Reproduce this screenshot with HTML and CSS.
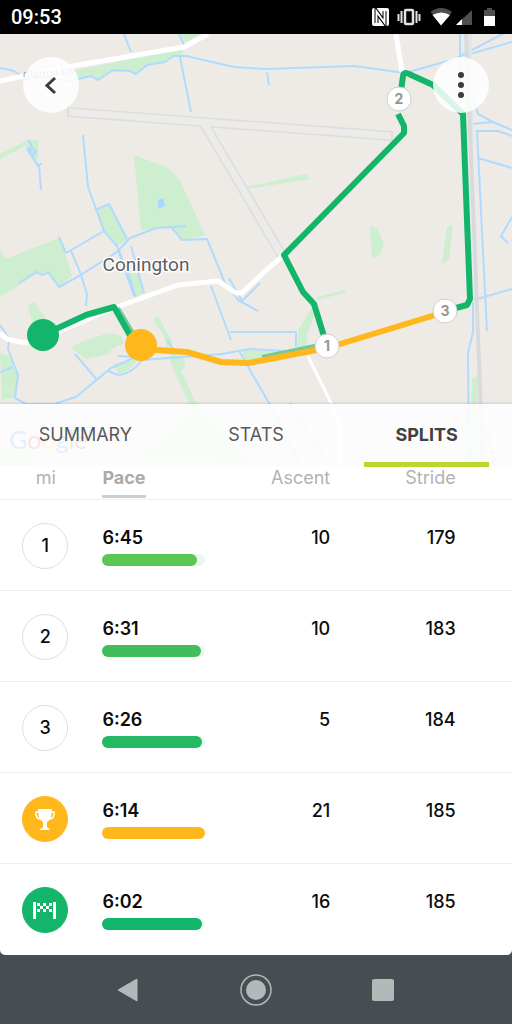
FILE: index.html
```html
<!DOCTYPE html>
<html lang="en">
<head>
<meta charset="utf-8">
<meta name="viewport" content="width=device-width, initial-scale=1">
<title>Activity splits</title>
<link rel="stylesheet" href="styles.css">
</head>
<body>
<header class="status">
  <time class="clock">09:53</time>
  <svg class="status-icons" viewBox="370 0 126 34" role="img" aria-label="NFC, vibrate, Wi-Fi, signal, battery">
    <rect x="372" y="8" width="17" height="18" rx="2" fill="#fff"/>
    <path d="M376.500 23V11.500l8 11V11" fill="none" stroke="#000" stroke-width="4"/>
    <path d="M376.500 23V11.500l8 11V11" fill="none" stroke="#fff" stroke-width="2"/>
    <rect x="405" y="10" width="8" height="14" rx="1" fill="none" stroke="#e2e2e2" stroke-width="2.500"/>
    <path d="M401.500 11v12M416.500 11v12M398.500 14v7M419.500 14v7" stroke="#e2e2e2" stroke-width="2"/>
    <path d="M430.500 12Q441 4 452 12L441 25z" fill="#4e4e4e"/>
    <path d="M432.500 15q8.500-5 17.500 0l-9 10.500z" fill="#fff"/>
    <path d="M472 10v15h-16z" fill="#4e4e4e"/><path d="M462 19v6h-6z" fill="#fff"/>
    <path d="M487 8h5v2h3v7h-11v-7h3z" fill="#4e4e4e"/><path d="M484 16h11v10h-11z" fill="#fff"/>
  </svg>
</header>

<main class="activity">
  <section class="map" aria-label="Route map">
    <svg class="map-canvas" viewBox="0 34 512 432" preserveAspectRatio="xMidYMid slice">
      <rect class="land" y="34" width="512" height="432"/>
      <g class="green">
        <path d="M76 70L182 49l1 6-14 3-7 5-14 2-13 10-7-4-16 1-15 9-7-5-20 3z"/>
        <path d="M179 34h22l-15 8z"/>
        <path d="M0 154l28-14h10v24l-10-15-3-3-25 13z"/>
        <path d="M134 155l32 12q12 8 17 20l22 48-23 6-9-13-32 2-2-20z"/>
        <path d="M246 187l61-13 3 5-63 10z"/>
        <path d="M96 210l13-6 19 36-12 6-11-14z"/>
        <path d="M0 250l5 9 54-21 6 14 7 24-13 11-11-15-12 2-18 12L0 297z"/>
        <path d="M126 274l12-1 6 20-8 4-5-9z"/>
        <path d="M28 306l6-4 12 16-13 6zM71 348l12-7 26-8 12 3 3 8-8 2-10 9-20 4z"/>
        <path d="M153 319l5-3 13 24 3 13 11 7v7l-4 4 35 74h-8l-37-81-7-28z"/>
        <path d="M0 353l13 4v10l5 9-4 21-12 3zM113 364l27-6-11 12-10 4z"/>
        <path d="M370 226l8 3 6 16-5 11-7 2zM447 227l6-2-4 34-7 5zM317 297l28-7v3l-28 7z"/>
        <path d="M311 309l4 5-8 21v13h-9v-18zM242 350l60 2-45 9-13-1z"/>
        <path d="M472 378l6-2-1 90h-7zM0 448h32v18H0zM140 455l52-45 28 15 32 41z"/>
      </g>
      <g class="water">
        <path d="M0 68l14 3 6 4 50 6 21-5 7 4 15-10 16 1 7 3 11-9 18-3 8-6 13 0 48 11 30 2 90-3 51 7 50-14 55-29"/>
        <path d="M179 34l6 13M124 34l7 18M180 57l11 55M267 72l2 13"/>
        <path d="M28 140l4 6-2 4 3 6 3-5-5-3-4 1 11 17 3-2-2 1 2 25"/>
        <path d="M83 135l5 52 16 44 13 15 12 30 7 22M95 210l14-6 18 35M66 253l38-22M59 237l7 16M71 251l9 21 7 22-1 12M118 250l16 46M131 246l13 47"/>
        <path d="M19 283l17-11 7 3 5-3 11 15 20-11 38-24 13-14 26-10 30-2"/>
        <path d="M172 228l10 12 25-1 18 44 13 17 20 11M211 286l20 54M230 332h66v15M229 278l6 11 7 12 18-18"/>
        <path d="M0 325l9 14-1 10 10 26-3 23 11 6h28l22-7 35-29 25-11-18-1M0 372l13-5M75 354l22 26M108 371l10 4q14-1 24-15l80-6 27-5 54 3M239 351l30 52 30 60M167 340l7 10"/>
        <path d="M460 34v50M469 84l9 30 15 8 19 8M470 54l42-12M472 124l20-2"/>
        <path d="M476 131l22 0 14 5M477 131l10 200M478 158l34 10M474 300l38-11M512 217l-11 19 7 7M473 302v30l-5 21 1 112M487 430l7 35M290 403l39 62"/>
      </g>
      <g class="runway">
        <path d="M67 112l326 24M202 120l82 139"/>
        <path class="runway-fill" d="M69 112l322 24M202 120l82 139"/>
      </g>
      <path class="rail-light" d="M470 34l2 170"/>
      <path class="rail" d="M466 34l7 170 10 262"/>
      <g class="road">
        <path d="M0 81l67-14 117-20 24-13M396 34l6 38"/>
        <path d="M0 333l7 6 13 3 20 1 20-12 54-23 64-23 40-4 18 12h6l23-22 19-16"/>
        <path class="lane" d="M308 356l22 45 10 26v39"/>
      </g>
      <path class="run shade" d="M118 308l24 40M262 357l62-13"/>
      <path class="run" d="M43 335l43-20 28-8 21 37M327 346l-13-42-11-12-19-37 120-122v-7l-6-12M400 98l3-22q1-5 6-2l24 11 30 29 7 185-3 6-22 6"/>
      <path class="run fast" d="M141 349l46 3 34 10 28 1 78-15 118-36"/>
      <circle class="start" cx="43" cy="335" r="16"/>
      <circle class="best" cx="141" cy="345" r="16"/>
      <g class="pin">
        <circle cx="399" cy="99" r="12"/><circle cx="327" cy="346" r="12"/><circle cx="445" cy="311" r="12"/>
        <text x="399" y="104">2</text><text x="327" y="351">1</text><text x="445" y="316">3</text>
      </g>
      <path fill="#a9d8ff" d="M158 200l5-2 2 8-7 3z"/>
      <text class="street" transform="rotate(-7 48 73)" x="48" y="77">Glatton Ln</text>
      <text class="place" x="146" y="271">Conington</text>
      <text class="google" x="9" y="449"><tspan fill="#4285f4">G</tspan><tspan fill="#ea4335">o</tspan><tspan fill="#fbbc05">o</tspan><tspan fill="#4285f4">g</tspan><tspan fill="#34a853">l</tspan><tspan fill="#ea4335">e</tspan></text>
    </svg>
    <div class="map-actions">
      <button class="round" type="button" aria-label="Back">
        <svg viewBox="0 0 56 56"><path d="M32 21l-8 7.500 8 7.500" fill="none" stroke="#3c3c3c" stroke-width="3"/></svg>
      </button>
      <button class="round" type="button" aria-label="More options">
        <svg viewBox="0 0 56 56" fill="#3c3c3c"><circle cx="28" cy="18" r="3"/><circle cx="28" cy="28" r="3"/><circle cx="28" cy="38" r="3"/></svg>
      </button>
    </div>
    <nav class="tabs" aria-label="Activity views">
      <button class="tab" type="button">SUMMARY</button>
      <button class="tab" type="button">STATS</button>
      <button class="tab active" type="button" aria-current="page">SPLITS</button>
    </nav>
  </section>

  <table class="splits">
    <colgroup><col class="col-mi"><col class="col-pace"><col class="col-ascent"><col></colgroup>
    <thead>
      <tr><th class="mi" scope="col">mi</th><th scope="col"><button class="sort" type="button">Pace</button></th><th class="num" scope="col">Ascent</th><th class="num last" scope="col">Stride</th></tr>
    </thead>
    <tbody>
      <tr><td class="mi"><span class="badge">1</span></td><td><span class="pace">6:45</span><div class="track"><div class="fill lime" style="width:92%"></div></div></td><td class="num">10</td><td class="num last">179</td></tr>
      <tr><td class="mi"><span class="badge">2</span></td><td><span class="pace">6:31</span><div class="track"><div class="fill leaf" style="width:96%"></div></div></td><td class="num">10</td><td class="num last">183</td></tr>
      <tr><td class="mi"><span class="badge">3</span></td><td><span class="pace">6:26</span><div class="track"><div class="fill jade" style="width:97%"></div></div></td><td class="num">5</td><td class="num last">184</td></tr>
      <tr><td class="mi"><span class="badge gold"><svg viewBox="0 0 46 46" role="img" aria-label="Fastest mile"><path d="M16 13h14c0 8-2 11-5 13v5c0 1 3 1 3 3H18c0-2 3-2 3-3v-5c-3-2-5-5-5-13z" fill="#fff"/><path d="M17 16h-3v3q1 4 5 4M29 16h3v3q-1 4-5 4" fill="none" stroke="#fff" stroke-width="1.500"/></svg></span></td><td><span class="pace">6:14</span><div class="track"><div class="fill amber" style="width:100%"></div></div></td><td class="num">21</td><td class="num last">185</td></tr>
      <tr><td class="mi"><span class="badge finish"><svg viewBox="0 0 46 46" role="img" aria-label="Finish"><path d="M11 15h3v17h-3zM31 15h3v17h-3zM15 16h3v3h-3zM21 16h3v3h-3zM27 16h3v3h-3zM18 19h3v3h-3zM24 19h3v3h-3zM15 22h3v3h-3zM21 22h3v3h-3zM27 22h3v3h-3z" fill="#fff"/></svg></span></td><td><span class="pace">6:02</span><div class="track"><div class="fill green-bar" style="width:97%"></div></div></td><td class="num">16</td><td class="num last">185</td></tr>
    </tbody>
  </table>
</main>

<nav class="system" aria-label="System">
  <button type="button" aria-label="Back"><svg viewBox="0 0 32 32"><path d="M6 16L25 5v22z" fill="#b3b8b9" stroke="#b3b8b9" stroke-linejoin="round"/></svg></button>
  <button type="button" aria-label="Home"><svg viewBox="0 0 32 32"><circle cx="16" cy="16" r="15" fill="none" stroke="#b3b8b9" stroke-width="1.500"/><circle cx="16" cy="16" r="10" fill="#b3b8b9"/></svg></button>
  <button type="button" aria-label="Recent apps"><svg viewBox="0 0 32 32"><rect x="4" y="5" width="22" height="22" rx="2" fill="#b3b8b9"/></svg></button>
</nav>
</body>
</html>
```
FILE: styles.css
```css
* { box-sizing: border-box; }

body {
  margin: 0;
  min-height: 100vh;
  display: flex;
  flex-direction: column;
  background: #464e53;
  font-family: Inter, "Open Sans", sans-serif;
  color: #0c0c0c;
}

button {
  border: 0;
  padding: 0;
  background: none;
  font: inherit;
  color: inherit;
  cursor: pointer;
}

svg { display: block; }

.status {
  height: 34px;
  padding: 0 16px 0 11px;
  display: flex;
  align-items: center;
  justify-content: space-between;
  background: #000;
  color: #fff;
}
.clock { font: 500 20px/36px Roboto, sans-serif; }
.status-icons { width: 126px; height: 34px; }

.activity {
  background: #fff;
  border-radius: 0 0 5px 5px;
}

/* Map */
.map { position: relative; height: 432px; }
.map-canvas { width: 100%; height: 100%; }
.land { fill: #eeebe7; }
.green { fill: #cdeecf; }
.water { fill: none; stroke: #b0dbff; stroke-width: 2; stroke-linejoin: round; }
.runway { fill: none; stroke: #dedddd; stroke-width: 10; }
.runway .runway-fill { stroke: #ebebea; stroke-width: 7; }
.rail { fill: none; stroke: #d8dadc; stroke-width: 4; }
.rail-light { fill: none; stroke: #e1e6ea; stroke-width: 4; }
.road { fill: none; stroke: #fff; stroke-width: 5; stroke-linejoin: round; }
.lane { stroke-width: 3; }
.run { fill: none; stroke: #13b56a; stroke-width: 6; stroke-linejoin: round; }
.shade { stroke: #73c99b; stroke-width: 4; }
.fast { stroke: #ffb71b; }
.start { fill: #13b56a; }
.best { fill: #ffb71b; }
.pin circle { fill: #fff; stroke: #cfcfcf; }
.pin text { font-size: 14px; font-weight: 700; fill: #969696; text-anchor: middle; }
.street { font: 11px Roboto, sans-serif; fill: #9a9a9a; text-anchor: middle; }
.place {
  font: 19px Roboto, sans-serif;
  fill: #5a6066;
  stroke: #fff;
  stroke-width: 3;
  paint-order: stroke;
  text-anchor: middle;
}
.google { font: 25px Lato, sans-serif; }

.map-actions {
  position: absolute;
  inset: 23px 23px auto;
  display: flex;
  justify-content: space-between;
}
.round {
  width: 56px;
  height: 56px;
  border-radius: 50%;
  background: rgba(255, 255, 255, .85);
}

.tabs {
  position: absolute;
  inset: auto 0 0;
  height: 62px;
  display: grid;
  grid-template-columns: repeat(3, 1fr);
  background: rgba(255, 255, 255, .86);
  box-shadow: 0 -1px 2px rgba(0, 0, 0, .12);
}
.tab {
  position: relative;
  font-size: 18px;
  line-height: 62px;
  color: #58595a;
}
.tab.active { font-weight: 700; color: #404142; }
.tab.active::after {
  content: "";
  position: absolute;
  inset: auto 23px -1px;
  height: 5px;
  background: #bdd62f;
}

/* Splits */
.splits {
  width: 100%;
  table-layout: fixed;
  border-collapse: separate;
  border-spacing: 0;
  font-size: 18px;
  line-height: 24px;
}
.col-mi, .col-pace { width: 20%; }
.col-ascent { width: 24.5%; }
.splits th {
  height: 34px;
  padding: 0;
  border-bottom: 1px solid #efefef;
  vertical-align: top;
  text-align: left;
  font-weight: 400;
  color: #b2b2b2;
}
.sort {
  height: 32px;
  padding-bottom: 5px;
  border-bottom: 3px solid #cecece;
  font-weight: 700;
  line-height: 24px;
  color: #aaa;
}
.splits td {
  height: 91px;
  padding: 26px 0 0;
  border-bottom: 1px solid #efefef;
  vertical-align: top;
}
.splits tr:last-child td { border-bottom: 0; }
.splits .num { text-align: right; font-weight: 500; }
.splits th.num { font-weight: 400; }
.splits .last { padding-right: 11%; }
.splits th.mi { padding-right: 11px; text-align: center; }
.splits td.mi { padding: 23px 12px 0 0; text-align: center; }
.badge {
  display: inline-flex;
  width: 46px;
  height: 46px;
  align-items: center;
  justify-content: center;
  border: 1px solid #dfdfdf;
  border-radius: 50%;
  font-weight: 500;
}
.badge svg { width: 46px; height: 46px; flex: none; }
.gold { background: #ffb71b; border-color: #ffb71b; }
.finish { background: #13b56a; border-color: #13b56a; }
.pace { display: block; font-weight: 600; }
.track {
  height: 12px;
  margin-top: 4px;
  border-radius: 6px;
  background: #eaf7ee;
}
.fill { height: 100%; border-radius: 6px; }
.lime { background: #5dc553; }
.leaf { background: #41be5c; }
.jade { background: #25b963; }
.amber { background: #ffb71b; }
.green-bar { background: #13b56a; }

/* System navigation */
.system {
  flex: 1;
  min-height: 69px;
  padding: 0 64px;
  display: grid;
  grid-template-columns: repeat(3, 1fr);
  align-items: center;
  justify-items: center;
}
.system svg { width: 32px; height: 32px; }
```
